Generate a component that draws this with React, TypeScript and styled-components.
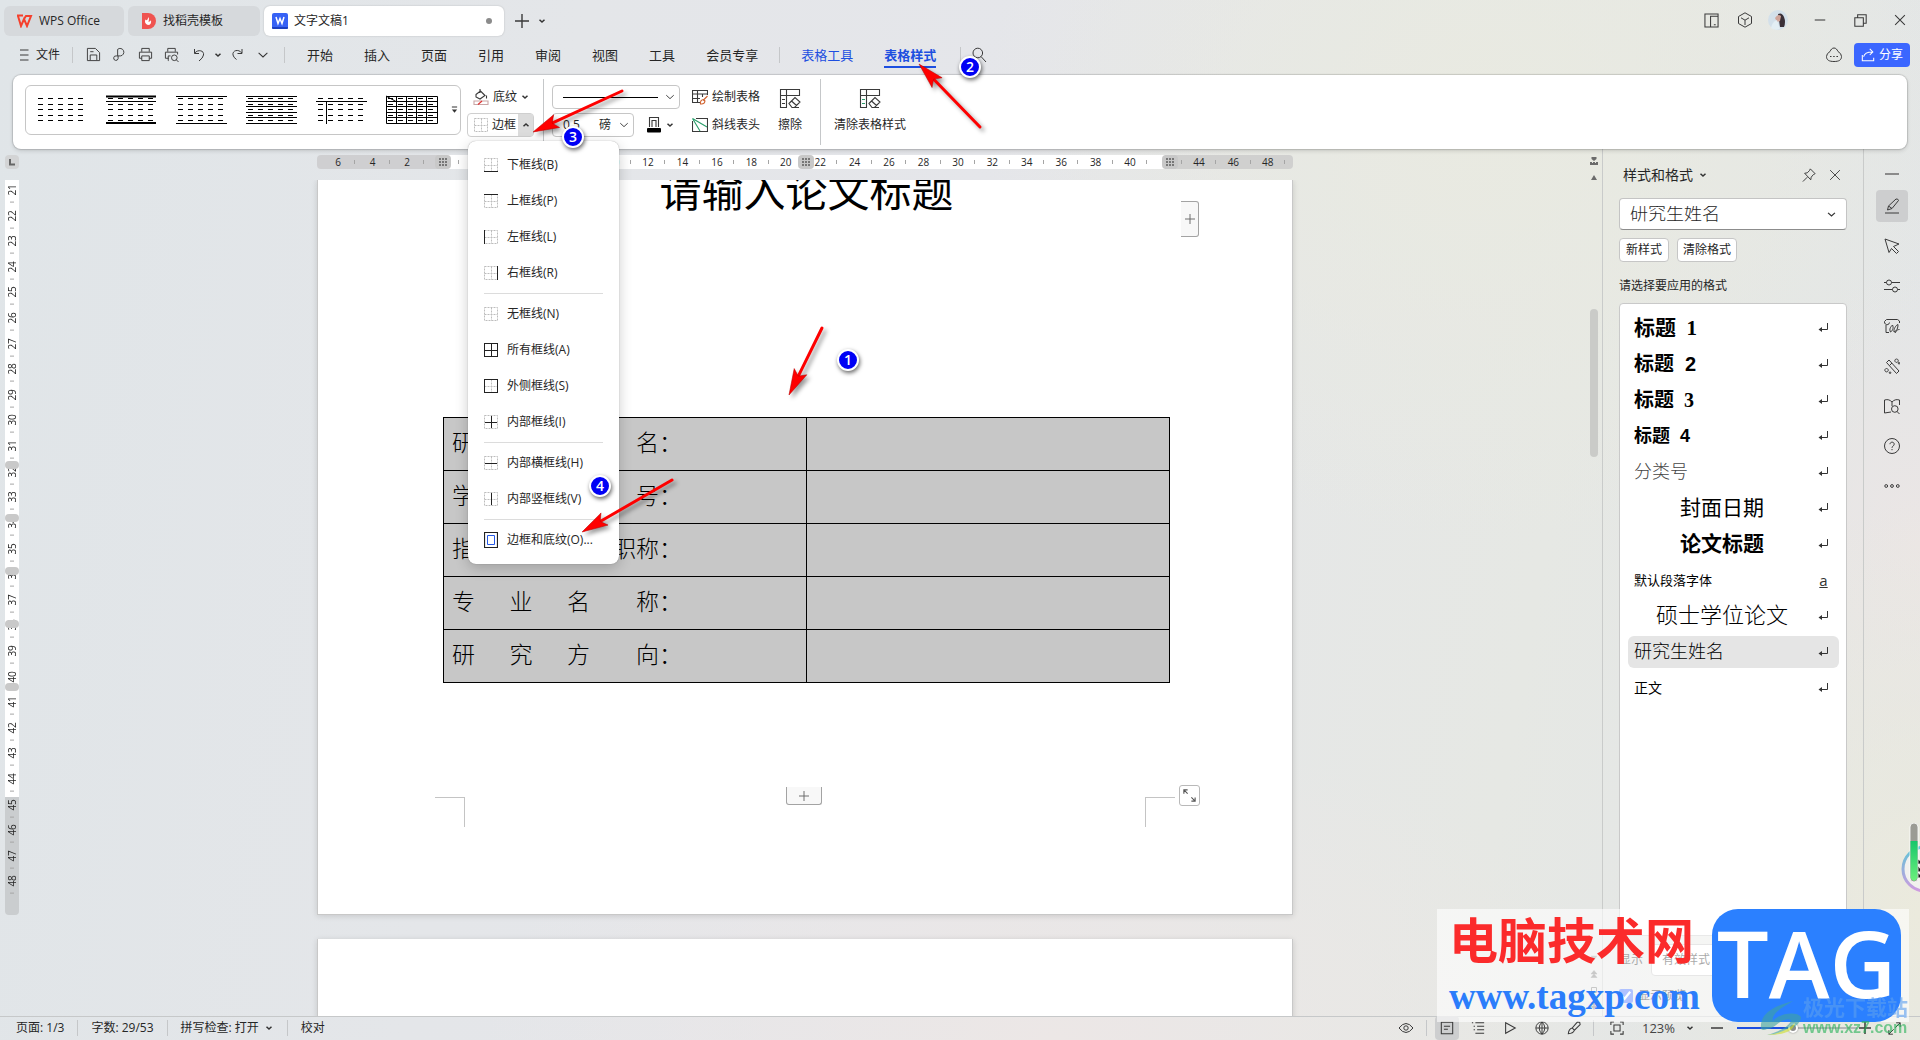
import React from "react";
import styled, { createGlobalStyle, css } from "styled-components";

const UI = `"Open Sans", "Noto Sans CJK SC", sans-serif`;
const SERIF = `"Liberation Serif", "Noto Sans CJK SC", serif`;
const ARIAL = `"Liberation Sans", "Noto Sans CJK SC", sans-serif`;

const Global = createGlobalStyle`
  *, *::before, *::after { box-sizing: border-box; }
  body { margin: 0; font-family: ${UI}; font-size: 12px; line-height: 16px; color: #262626; }
  button, input, select { font: inherit; color: inherit; margin: 0; }
  button { border: 0; padding: 0; background: none; white-space: nowrap; }
  h1, h2, p, ul { margin: 0; padding: 0; font-weight: inherit; font-size: inherit; }
  ul { list-style: none; }
  svg { display: block; flex: none; }
`;

/* ---------- shell ---------- */

const Shell = styled.div`
  position: relative;
  display: flex;
  flex-direction: column;
  height: 100vh;
  overflow: hidden;
  background:
    radial-gradient(ellipse 26% 40% at 77% 12%, #e9eae1 0%, #e9eae100 100%),
    radial-gradient(ellipse 30% 30% at 55% 100%, #ece7e6 0%, #ece7e600 100%),
    radial-gradient(ellipse 16% 40% at 100% 88%, #ebeadd 0%, #ebeadd00 100%),
    radial-gradient(ellipse 10% 26% at 100% 52%, #ebe6e5 0%, #ebe6e500 100%),
    linear-gradient(100deg, #e0e5e8 0%, #e4e6e9 28%, #e5e6ea 50%, #e6e8e4 78%, #e2e5e8 100%);
`;

const Row = styled.div<{ $gap?: number }>`
  display: flex;
  align-items: center;
  gap: ${(p) => p.$gap ?? 0}px;
`;

const Rule = styled.span<{ $l?: number; $r?: number; $h?: number }>`
  flex: none;
  width: 1px;
  height: ${(p) => p.$h ?? 16}px;
  margin: 0 ${(p) => p.$r ?? 0}px 0 ${(p) => p.$l ?? 0}px;
  background: #c5c7c9;
`;

const IconButton = styled.button<{ $w?: number; $h?: number; $on?: boolean }>`
  display: flex;
  flex: none;
  align-items: center;
  justify-content: center;
  width: ${(p) => p.$w ?? 26}px;
  height: ${(p) => p.$h ?? 24}px;
  border-radius: 4px;
  background: ${(p) => (p.$on ? "#cdcecf" : "transparent")};
`;

const Spacer = styled.span`
  flex: 1;
`;

/* ---------- title bar ---------- */

const TitleBar = styled.header`
  display: flex;
  align-items: flex-end;
  height: 36px;
  padding: 0 0 0 4px;
`;

const DocTab = styled.button<{ $w: number; $active?: boolean }>`
  display: flex;
  align-items: center;
  gap: 6px;
  width: ${(p) => p.$w}px;
  height: 30px;
  margin-right: 4px;
  padding: 0 12px 0 8px;
  border-radius: 6px;
  background: ${(p) => (p.$active ? "#fff" : "#d6d9dc")};
  ${(p) => p.$active && css`box-shadow: 0 0 2px #0003;`}
`;

const Dirty = styled.i`
  width: 6px;
  height: 6px;
  margin-left: auto;
  border-radius: 50%;
  background: #8b8b8b;
`;

const WindowTools = styled.div`
  display: flex;
  align-items: center;
  gap: 6px;
  height: 36px;
  padding-top: 4px;
`;

/* ---------- menu row ---------- */

const MenuRow = styled.nav`
  display: flex;
  align-items: center;
  height: 39px;
  padding: 0 10px 2px 16px;
`;

const FileButton = styled.button`
  display: flex;
  align-items: center;
  gap: 4px;
`;

const Tabs = styled.div`
  display: flex;
  gap: 31px;
  height: 100%;
  align-items: center;
`;

const MenuTab = styled.button<{ $blue?: boolean; $active?: boolean }>`
  font-size: 13px;
  line-height: 22px;
  border-bottom: 2px solid ${(p) => (p.$active ? "#1d4fe0" : "transparent")};
  border-top: 2px solid transparent;
  color: ${(p) => (p.$blue ? "#1d4fe0" : "#262626")};
  font-weight: ${(p) => (p.$active ? 700 : 400)};
`;

const ShareButton = styled.button`
  display: flex;
  align-items: center;
  justify-content: center;
  gap: 4px;
  width: 56px;
  height: 24px;
  margin-left: 12px;
  border-radius: 4px;
  background: #3b66ff;
  color: #fff;
`;

/* ---------- ribbon ---------- */

const Ribbon = styled.section`
  position: relative;
  z-index: 2;
  display: flex;
  align-items: flex-start;
  flex: none;
  height: 74px;
  margin: 0 13px;
  padding: 10px 12px;
  border-radius: 8px;
  background: #fff;
  box-shadow: 0 0 1px 1px #0002, 0 2px 4px #0002;
`;

const Gallery = styled.div`
  display: flex;
  align-items: center;
  justify-content: space-between;
  width: 436px;
  height: 50px;
  padding: 0 2px 0 10px;
  border: 1px solid #c6c6c6;
  border-radius: 6px;
`;

const Stack = styled.div<{ $l?: number; $w?: number }>`
  display: flex;
  flex-direction: column;
  gap: 4px;
  margin-left: ${(p) => p.$l ?? 0}px;
  width: ${(p) => (p.$w ? p.$w + "px" : "auto")};
`;

const RibbonButton = styled.button<{ $pad?: number }>`
  display: flex;
  align-items: center;
  gap: 4px;
  height: 24px;
  padding-left: ${(p) => p.$pad ?? 0}px;
`;

const SplitButton = styled.div`
  position: relative;
  display: flex;
  align-items: center;
  height: 24px;
  border: 1px solid #cfcfcf;
  border-radius: 4px;
`;

const SplitArrow = styled.button`
  display: flex;
  align-items: center;
  justify-content: center;
  width: 15px;
  height: 22px;
  margin-left: auto;
  background: #dcdcdc;
`;

const Combo = styled.div<{ $w?: number }>`
  position: relative;
  display: flex;
  align-items: center;
  width: ${(p) => (p.$w ? p.$w + "px" : "100%")};
  height: 24px;
  padding: 0 3px 0 8px;
  border: 1px solid #c6c6c6;
  border-radius: 4px;
  background: #fff;
  select {
    position: absolute;
    inset: 0;
    width: 100%;
    border: 0;
    opacity: 0;
    appearance: none;
  }
`;

const SizeInput = styled.input`
  width: 38px;
  padding: 0 0 0 2px;
  border: 0;
  outline: 0;
  background: none;
`;

const RibbonRule = styled(Rule)`
  height: 66px;
  margin-top: -6px;
`;

const BigButton = styled.button<{ $l: number }>`
  display: flex;
  flex-direction: column;
  align-items: center;
  gap: 8px;
  margin-left: ${(p) => p.$l}px;
  padding-top: 2px;
`;

/* ---------- border menu ---------- */

const Menu = styled.div`
  position: absolute;
  top: 27px;
  left: 0;
  width: 151px;
  padding: 6px 0;
  border-radius: 8px;
  background: #fff;
  box-shadow: 0 0 1px #0006, 0 4px 14px #0003;
  z-index: 5;
  hr {
    height: 1px;
    margin: 2px 16px;
    border: 0;
    background: #dcdcdc;
  }
`;

const MenuItem = styled.button`
  display: flex;
  align-items: center;
  gap: 9px;
  width: 100%;
  height: 36px;
  padding-left: 16px;
`;

/* ---------- workspace ---------- */

const Main = styled.main`
  display: flex;
  flex: 1;
  min-height: 0;
`;

const Editor = styled.section`
  display: grid;
  flex: 1;
  min-width: 0;
  grid-template: 31px minmax(0, 1fr) / 24px minmax(0, 1fr) 16px;
`;

const TabStop = styled.button`
  width: 14px;
  height: 14px;
  margin: 6px 0 0 5px;
  border-radius: 4px;
  background: #d3d4d5;
  display: grid;
  place-items: center;
`;

const Grip = styled.i<{ $x: number }>`
  position: absolute;
  top: 6px;
  left: ${(p) => p.$x}px;
  display: grid;
  place-items: center;
  width: 16px;
  height: 14px;
  border-radius: 4px;
  background: #c8c8c8;
`;

const RulerWrap = styled.div`
  position: relative;
  width: 976px;
  margin: 0 auto;
`;

const HRuler = styled.div`
  display: grid;
  grid-template-columns: repeat(28, minmax(0, 1fr));
  height: 14px;
  margin-top: 6px;
  padding: 0 8px 0 4px;
  border-radius: 4px;
  background: linear-gradient(90deg, #cfcfd1 126px, #fff 126px, #fff 848px, #d0d0cf 848px);
`;

const HCell = styled.span`
  display: grid;
  place-items: center;
  font-size: 10px;
  line-height: 14px;
  background: linear-gradient(#a5a5a5, #a5a5a5) right center / 1px 4px no-repeat;
`;

const VRuler = styled.div`
  position: relative;
  width: 14px;
  height: 735px;
  margin-left: 5px;
  overflow: hidden;
  border-radius: 0 0 4px 4px;
  background: linear-gradient(#fff 617px, #cacdcf 617px);
`;

const VTrack = styled.div`
  display: grid;
  grid-template-rows: repeat(28, minmax(0, 1fr));
  height: 717px;
  margin-top: -3px;
`;

const VCell = styled.span`
  writing-mode: vertical-rl;
  rotate: 180deg;
  display: grid;
  place-items: center;
  font-size: 10px;
  line-height: 14px;
  background: linear-gradient(#a5a5a5, #a5a5a5) center top / 4px 1px no-repeat;
`;

const VGrip = styled.i`
  position: absolute;
  left: 0;
  width: 14px;
  height: 8px;
  border-radius: 4px;
  background: #c9c9c9;
`;

const Viewport = styled.div`
  overflow: hidden;
`;

const Page = styled.article`
  position: relative;
  width: 976px;
  height: 735px;
  margin: 0 auto 24px;
  padding: 0 122px 0 125px;
  background: #fff;
  border: 1px solid #c8c8c8;
  border-top: 0;
  box-shadow: 0 1px 6px #0002;
`;

const PaperTitle = styled.h1`
  padding-bottom: 211px;
  font-family: ${SERIF};
  font-size: 42px;
  line-height: 26px;
  color: #000;
  text-align: center;
`;

const InfoTable = styled.table`
  width: 100%;
  border-collapse: collapse;
  table-layout: fixed;
  background: #c7c7c7;
  font-family: ${SERIF};
  font-weight: 300;
  font-size: 23px;
  line-height: 24px;
  color: #000;
  td, th {
    height: 53px;
    padding: 0 0 0 8px;
    border: 1px solid #000;
    text-align: left;
    font-weight: 300;
    white-space: nowrap;
  }
`;

const CropMark = styled.i<{ $side: "left" | "right" }>`
  position: absolute;
  top: 617px;
  width: 30px;
  height: 30px;
  border-top: 1px solid #c4c4c4;
  ${(p) =>
    p.$side === "left"
      ? css`left: 117px; border-right: 1px solid #c4c4c4;`
      : css`right: 117px; border-left: 1px solid #c4c4c4;`}
`;

const PageButton = styled.button<{ $kind: "row" | "col" | "size" }>`
  position: absolute;
  display: grid;
  place-items: center;
  background: #f8f8f8;
  border: 1px solid #a3a3a3;
  ${(p) =>
    p.$kind === "row" &&
    css`left: 468px; top: 607px; width: 36px; height: 18px; border-top: 0; border-radius: 0 0 3px 3px;`}
  ${(p) =>
    p.$kind === "col" &&
    css`right: 93px; top: 21px; width: 18px; height: 36px; border-left: 0; border-radius: 0 3px 3px 0;`}
  ${(p) =>
    p.$kind === "size" &&
    css`right: 92px; top: 605px; width: 21px; height: 21px; background: #fff; border-color: #b9b9b9; border-radius: 3px;`}
`;

const ScrollHead = styled.div`
  display: flex;
  flex-direction: column;
  align-items: center;
  padding-top: 8px;
`;

const ScrollTrack = styled.div`
  display: flex;
  flex-direction: column;
  align-items: center;
`;

const ScrollThumb = styled.i`
  width: 8px;
  height: 148px;
  margin-top: 129px;
  border-radius: 4px;
  background: #cacbc8;
`;

const PageJump = styled.div`
  display: flex;
  flex-direction: column;
  align-items: center;
  gap: 8px;
  margin: auto 0 6px;
`;

/* ---------- style panel ---------- */

const Panel = styled.aside`
  display: flex;
  flex-direction: column;
  width: 262px;
  padding: 15px 16px 8px 16px;
  border-left: 1px solid #c9cbca;
  border-right: 1px solid #c9cbca;
`;

const PanelHead = styled.div`
  display: flex;
  align-items: center;
  height: 22px;
  padding-left: 4px;
  h2 {
    font-size: 14px;
    line-height: 20px;
  }
`;

const CurrentStyle = styled.div`
  display: flex;
  padding: 12px 0 8px;
`;

const SelectBox = styled.div<{ $large?: boolean }>`
  position: relative;
  flex: 1;
  select {
    display: block;
    width: 100%;
    height: 32px;
    padding: 0 30px 0 10px;
    border: 1px solid #c4c4c4;
    border-radius: 4px;
    background: #fff;
    appearance: none;
    ${(p) =>
      p.$large &&
      css`font-family: ${SERIF}; font-size: 18px; font-weight: 300; border-bottom-color: #8c8c8c;`}
  }
  svg {
    position: absolute;
    right: 10px;
    top: 11px;
    pointer-events: none;
  }
`;

const SmallButton = styled.button<{ $w: number }>`
  display: flex;
  align-items: center;
  justify-content: center;
  gap: 4px;
  width: ${(p) => p.$w}px;
  height: 24px;
  border: 1px solid #c6c6c6;
  border-radius: 4px;
  background: #fff;
`;

const ListLabel = styled.p`
  margin-top: 16px;
`;

const StyleList = styled.ul`
  flex: 1;
  display: flex;
  flex-direction: column;
  gap: 4px;
  margin: 9px 0 8px;
  padding: 8px 7px 8px 8px;
  border: 1px solid #c9c9c9;
  border-radius: 4px;
  background: #fff;
`;

const StyleItem = styled.button<{ $size: number; $font?: string; $weight?: number; $center?: boolean; $on?: boolean; $tone?: string }>`
  display: flex;
  align-items: center;
  width: 100%;
  height: 32px;
  padding: 0 10px 0 6px;
  border-radius: 6px;
  background: ${(p) => (p.$on ? "#e5e5e5" : "transparent")};
  color: ${(p) => p.$tone ?? "#000"};
  font-family: ${(p) => p.$font ?? UI};
  font-size: ${(p) => p.$size}px;
  font-weight: ${(p) => p.$weight ?? 400};
  line-height: 30px;
  > span {
    flex: 1;
    text-align: ${(p) => (p.$center ? "center" : "left")};
    padding-right: 8px;
    white-space: pre;
  }
`;

const CharMark = styled.b`
  width: 11px;
  font: 400 15px/14px ${UI};
  text-decoration: underline;
  color: #333;
  text-align: center;
`;

const PanelFoot = styled.div`
  display: flex;
  align-items: center;
  justify-content: space-between;
  padding-top: 8px;
  label {
    display: flex;
    align-items: center;
    gap: 5px;
  }
  input {
    width: 14px;
    height: 14px;
    accent-color: #3b66ff;
  }
`;

const SideBar = styled.aside`
  display: flex;
  flex-direction: column;
  align-items: center;
  gap: 8px;
  width: 56px;
  padding-top: 17px;
`;

/* ---------- status bar ---------- */

const StatusBar = styled.footer`
  display: flex;
  flex: none;
  align-items: center;
  height: 24px;
  padding: 0 4px 1px 16px;
  border-top: 1px solid #c6c8c9;
  white-space: nowrap;
`;

const StatusIcons = styled.div`
  display: flex;
  gap: 6px;
  padding-left: 6px;
`;

const Zoom = styled.input`
  width: 120px;
  height: 14px;
  margin: 0 1px 0 8px;
  appearance: none;
  background: none;
  &::-webkit-slider-runnable-track {
    height: 2px;
    background: linear-gradient(90deg, #1d4fe0 46%, #b5b7b8 46%);
  }
  &::-webkit-slider-thumb {
    appearance: none;
    width: 10px;
    height: 10px;
    margin-top: -4px;
    border: 2px solid #fff;
    border-radius: 50%;
    background: #8c8c8c;
    box-shadow: 0 0 2px #0006;
  }
`;

const ZoomValue = styled.span`
  margin-left: 12px;
  font-size: 13px;
  color: #444;
`;

/* ---------- overlays ---------- */

const Arrows = styled.svg`
  position: absolute;
  top: 0;
  left: 0;
  z-index: 8;
  pointer-events: none;
  filter: drop-shadow(3px 3px 2px #0006);
`;

const Step = styled.span<{ $x: number; $y: number }>`
  position: absolute;
  left: ${(p) => p.$x - 11}px;
  top: ${(p) => p.$y - 11}px;
  z-index: 9;
  width: 22px;
  height: 22px;
  border: 2px solid #fff;
  border-radius: 50%;
  background: #0000f5;
  color: #fff;
  font-size: 14px;
  font-weight: 600;
  line-height: 18px;
  text-align: center;
  box-shadow: 1px 2px 4px #0009;
`;

const Watermark = styled.div`
  position: absolute;
  right: 11px;
  bottom: 18px;
  z-index: 6;
  display: flex;
  justify-content: space-between;
  width: 472px;
  height: 113px;
  padding: 0 8px 0 12px;
  background: #ffffff99;
`;

const SiteName = styled.div`
  font: 700 49px/58px "Noto Sans CJK SC", sans-serif;
  color: #fb2b2b;
  white-space: nowrap;
`;

const SiteUrl = styled.div`
  margin-top: 10px;
  font: 700 37px/40px "Liberation Serif", serif;
  color: #2b7dfb;
`;

const TagBadge = styled.div`
  width: 189px;
  height: 113px;
  border-radius: 26px;
  background: #2b80ff;
  color: #fff;
  font: 600 92px/108px "Open Sans", sans-serif;
  text-align: center;
`;

const Aurora = styled.div`
  position: absolute;
  right: 12px;
  bottom: 3px;
  z-index: 7;
  display: flex;
  align-items: flex-end;
  opacity: 0.6;
  white-space: nowrap;
`;

const AuroraName = styled.div`
  font: 700 21px/26px "Noto Sans CJK SC", sans-serif;
  color: #5b9ef0;
`;

const AuroraUrl = styled.div`
  font: 700 16px/18px "Liberation Sans", sans-serif;
  color: #25b257;
`;

const Meter = styled.div`
  position: absolute;
  right: 0;
  top: 823px;
  z-index: 6;
`;

/* ---------- icons ---------- */

type IcoProps = { d: string; s?: number; c?: string; w?: number; fill?: string; children?: React.ReactNode };
const Ico = ({ d, s = 16, c = "#3a3a3a", w = 1, fill = "none", children }: IcoProps) => (
  <svg width={s} height={s} viewBox="0 0 16 16" fill={fill} stroke={c} strokeWidth={w} aria-hidden="true">
    <path d={d} />
    {children}
  </svg>
);

const Caret = ({ up, s = 8, w = 1.5, c = "#333" }: { up?: boolean; s?: number; w?: number; c?: string }) => (
  <svg width={s} height={s} viewBox="0 0 8 8" fill="none" stroke={c} strokeWidth={w} aria-hidden="true">
    <path d={up ? "M1.500 5.200 4 2.900 6.500 5.200" : "M1.500 2.800 4 5.100 6.500 2.800"} />
  </svg>
);

const Dots = () => (
  <svg width="10" height="10" viewBox="0 0 10 10" fill="#777" aria-hidden="true">
    {[1, 4, 7].map((y) => [1, 4, 7].map((x) => <rect key={`${x}${y}`} x={x} y={y} width="2" height="2" />))}
  </svg>
);

const EDGES: Record<string, string> = {
  b: "M0 13.5H14",
  t: "M0 .5H14",
  l: "M.5 0V14",
  r: "M13.5 0V14",
  h: "M1 7.5H13",
  v: "M7.5 1V13",
};

const BorderIcon = ({ edges }: { edges: string }) => (
  <svg width="14" height="14" viewBox="0 0 14 14" fill="none" aria-hidden="true">
    <path d="M.5.5H13.5V13.5H.5ZM.5 7.5H13.5M7.5 .5V13.5" stroke="#bdbdbd" strokeDasharray="2 1" />
    <path d={edges.split("").map((e) => EDGES[e]).join("")} stroke="#222" />
  </svg>
);

const FrameIcon = () => (
  <svg width="14" height="16" viewBox="0 0 14 16" fill="none" aria-hidden="true">
    <path d="M.5.5H13.5V15.5H.5Z" stroke="#222" strokeWidth="1.2" />
    <path d="M3.5 3.5H10.5V12.5H3.5Z" stroke="#2458e6" />
  </svg>
);

const dashes = [3, 9, 14, 20, 25].map((y) => [2, 12, 22, 32, 42].map((x) => `M${x} ${y + 0.5}h5`).join("")).join("");
const PREVIEWS: { extra: string; bold?: string }[] = [
  { extra: "" },
  { extra: "M0 6.5H50", bold: "M0 1.5H50M0 28H50" },
  { extra: "M0 1.5H51M0 28.5H51" },
  { extra: "M0 1.5H51M0 6.5H51M0 11.5H51M0 17.5H51M0 22.5H51M0 28.5H51" },
  { extra: "M0 6.5H51M10.5 6V29" },
  { extra: "M.5 1.5H51.5V28.5H.5ZM.5 6.5H51M.5 11.5H51M.5 17.5H51M.5 22.5H51M10.5 1V28M20.5 1V28M30.5 1V28M40.5 1V28M0 1 10 6.5" },
];
const Preview = ({ extra, bold }: { extra: string; bold?: string }) => (
  <svg width="52" height="30" viewBox="0 0 52 30" fill="none" stroke="#000" aria-hidden="true">
    <path d={dashes} />
    <path d={extra} />
    {bold && <path d={bold} strokeWidth="2" />}
  </svg>
);

const GridEraser = ({ tint = "#3a3a3a" }: { tint?: string }) => (
  <svg width="22" height="22" viewBox="0 0 22 22" fill="none" stroke="#3a3a3a" strokeWidth="1.1" aria-hidden="true">
    <path d="M8 20.500H1.500V2.500H20.500V9M1.500 8.500H20.500M7.500 2.500V20.500" />
    <path d="M3 12.500H6M3 16.500H6" stroke={tint} />
    <path d="m10 16.500 6-6 5 4.500-5.500 5.500h-2.500zM12.500 14l5 4.500M15 20.500h5" />
  </svg>
);

const ReturnMark = () => (
  <svg width="11" height="11" viewBox="0 0 11 11" fill="none" stroke="#333" aria-hidden="true">
    <path d="M9.500 0V6.500H2" />
    <path d="M4 4V9L.5 6.500Z" fill="#333" stroke="none" />
  </svg>
);

/* ---------- data ---------- */

const MENU: ([string, string] | null)[] = [
  ["b", "下框线(B)"],
  ["t", "上框线(P)"],
  ["l", "左框线(L)"],
  ["r", "右框线(R)"],
  null,
  ["", "无框线(N)"],
  ["btlrhv", "所有框线(A)"],
  ["btlr", "外侧框线(S)"],
  ["hv", "内部框线(I)"],
  null,
  ["h", "内部横框线(H)"],
  ["v", "内部竖框线(V)"],
  null,
  ["frame", "边框和底纹(O)..."],
];

const STYLES = [
  { t: "标题  1", size: 21, font: SERIF, weight: 700 },
  { t: "标题  2", size: 20, font: ARIAL, weight: 700 },
  { t: "标题  3", size: 20, font: SERIF, weight: 700 },
  { t: "标题  4", size: 18, font: ARIAL, weight: 700 },
  { t: "分类号", size: 18, font: SERIF, weight: 300, tone: "#444" },
  { t: "封面日期", size: 21, font: ARIAL, weight: 400, center: true },
  { t: "论文标题", size: 21, font: SERIF, weight: 700, center: true },
  { t: "默认段落字体", size: 13, mark: "a" },
  { t: "硕士学位论文", size: 22, font: SERIF, weight: 300, center: true },
  { t: "研究生姓名", size: 18, font: SERIF, weight: 300, on: true },
  { t: "正文", size: 14 },
];

const ROWS = [
  "研\u3000究\u3000生\u3000姓\u3000名：",
  "学\u3000\u3000\u3000\u3000\u3000\u3000\u3000号：",
  "指导教师姓名、职称：",
  "专\u3000\u2002业\u3000\u2002名\u3000\u3000称：",
  "研\u3000\u2002究\u3000\u2002方\u3000\u3000向：",
];

const H_MARKS = Array.from({ length: 28 }, (_, i) => Math.abs(i - 3) * 2);
const COLUMN_GRIPS = [118, 481, 845];
const V_MARKS = Array.from({ length: 28 }, (_, i) => 21 + i);
const ROW_GRIPS = [281, 334, 387, 440, 503];

const SIDE: [string, string][] = [
  ["属性", "M1 15H15M3.500 12l1-4 7.500-7q2-.5 2.500 1.500L8 10.500ZM4.500 8l3.500 2.500"],
  ["选择", "M1 1 15 6 9.500 8.500 14.500 13.500 12.500 15.500 7.500 10.500 5 14.500Z"],
  ["设置", "M0 4.500H2.500M7.500 4.500H16M0 11.500H8.500M13.500 11.500H16M2.500 4.500a2.500 2.500 0 1 0 5 0a2.500 2.500 0 1 0-5 0M8.500 11.500a2.500 2.500 0 1 0 5 0a2.500 2.500 0 1 0-5 0"],
  ["素材", "M5 14.500H2V7M15.500 5V3L13.500 1.500H2.500L.5 3.500C0 7 5 8 5.500 4.500M6.500 14C5 11 6.500 9 8.500 7C10 10 8.500 13 6.500 14ZM10 14C9.500 11 12 7 14 6.500C14 10 13 13 10 14ZM11 15C12.500 12 14 11.500 15.500 11.500"],
  ["工具", "M2.500 4.500 5 2 15 13 12.500 15.500ZM5.500 7.500 8 5M12.500 1a1.700 1.700 0 1 0 .1 0M2.500 10.500a1.700 1.700 0 1 0 .1 0M15 4.500a.8.800 0 1 0 .1 0M6 14a.8.800 0 1 0 .1 0"],
  ["查找", "M7 14 .5 15V2C4 1 6 2 8 4C10 2 12 1 15.500 2V7M8 4V8M7.500 11a3.300 3.300 0 1 0 6.600 0a3.300 3.300 0 1 0-6.600 0M13 13.500 15.500 16"],
  ["帮助", "M.5 8a7.500 7.500 0 1 0 15 0a7.500 7.500 0 1 0-15 0M6 6.200C6 3.500 10.200 3.500 10.200 6.200C10.200 8 8 8 8 9.800M8 11V12.200"],
  ["更多", "M.8 8a1.400 1.400 0 1 0 2.800 0a1.400 1.400 0 1 0-2.800 0M6.600 8a1.400 1.400 0 1 0 2.800 0a1.400 1.400 0 1 0-2.800 0M12.400 8a1.400 1.400 0 1 0 2.800 0a1.400 1.400 0 1 0-2.800 0"],
];

const ARROWS = [
  [822, 328, 789, 395],
  [980, 127, 919, 64],
  [622, 91, 533, 132],
  [672, 480, 582, 532],
];

const STEPS: [number, number, number][] = [
  [1, 848, 360],
  [2, 970, 67],
  [3, 573, 137],
  [4, 600, 486],
];

/* ---------- component ---------- */

export default function App() {
  return (
    <Shell>
      <Global />
      <TitleBar>
        <DocTab $w={120}>
          <svg width="21" height="14" viewBox="0 0 21 14" fill="none" stroke="#f5402c" strokeWidth="2" aria-hidden="true">
            <path d="M5 1.500H11M6 2 9 12 12 5 15 12 19 2H14L12 5" />
          </svg>
          WPS Office
        </DocTab>
        <DocTab $w={132}>
          <svg width="21" height="16" viewBox="0 0 21 16" aria-hidden="true">
            <path d="M6 0H12a8 8 0 0 1 0 16H6Z" fill="#ef5350" />
            <path d="M12 12C9 11 8.500 8.500 9.500 6.500C11 8 11.500 7 12.500 4C13.500 6 12.500 8 12.500 9C14 8.500 14.500 8 15 7C15.500 10 14.500 12 12 12Z" fill="#fff" />
          </svg>
          找稻壳模板
        </DocTab>
        <DocTab $w={240} $active>
          <svg width="16" height="16" viewBox="0 0 16 16" aria-hidden="true">
            <rect width="16" height="16" rx="2" fill="#3762f5" />
            <path d="M0 14H16V15Q16 16 15 16H1Q0 16 0 15Z" fill="#1c3fc0" />
            <path d="M4 4 6 10.500 8 5.500 10 10.500 12 4" fill="none" stroke="#fff" strokeWidth="1.500" />
          </svg>
          文字文稿1
          <Dirty />
        </DocTab>
        <IconButton aria-label="新建标签" $w={28} $h={30}><Ico d="M8 1V15M1 8H15" w={1.4} /></IconButton>
        <IconButton aria-label="标签列表" $w={12} $h={30}><Caret /></IconButton>
        <Spacer />
        <WindowTools>
          <Row>
            <IconButton aria-label="侧栏" $w={33}><Ico s={15} d="M1 1H15V15H1ZM7 15V3.500H15M10.500 12.500H12.500" w={1.1} /></IconButton>
            <IconButton aria-label="应用" $w={33}><Ico d="M8 .8 14.500 4.500V11.500L8 15.200 1.500 11.500V4.500ZM4 5.800 8 8.200 12 5.800M8 8.200V13" /></IconButton>
            <IconButton aria-label="账户" $w={33}>
              <svg width="20" height="20" viewBox="0 0 20 20" aria-hidden="true">
                <circle cx="10" cy="10" r="10" fill="#d3e0ea" />
                <path d="M10 4Q14 2 16 7Q18 12 16 17H12L11 10Z" fill="#3a3038" />
                <path d="M7 8Q10 3 13 6L12 11 9 12Z" fill="#cfa49a" />
                <path d="M3 18Q4 12 9 10L12 19Q7 21 3 18Z" fill="#e3eef4" />
              </svg>
            </IconButton>
          </Row>
          <Row>
            <IconButton aria-label="最小化" $w={40}><Ico s={12} d="M1 8H15" w={1.4} /></IconButton>
            <IconButton aria-label="还原" $w={40}><Ico s={13} d="M1 4.500H11.500V15H1ZM4.500 4V1H15V11.500H12" w={1.3} /></IconButton>
            <IconButton aria-label="关闭" $w={40}><Ico s={12} d="M1.500 1.500 14.500 14.500M14.500 1.500 1.500 14.500" w={1.4} /></IconButton>
          </Row>
        </WindowTools>
      </TitleBar>

      <MenuRow>
        <FileButton><Ico d="M4 3H12.500M4 8H12.500M4 13H12.500" />文件</FileButton>
        <Rule $l={12} $r={7} />
        <IconButton aria-label="保存"><Ico s={15} d="M1.500 1.500H10L14.500 6V14.500H1.500ZM4.500 14V8.500H11.500V14M4.500 5H8" /></IconButton>
        <IconButton aria-label="输出"><Ico s={15} d="M6 9.500V2.500A4 4 0 1 1 9 9.500H4.500A2.400 2.400 0 1 0 6.500 12.500V9.500" /></IconButton>
        <IconButton aria-label="打印"><Ico s={15} d="M4 5V1.500H12V5M4 12H1.500V5.500H14.500V12H12M4 9.500H12V14.500H4Z" /></IconButton>
        <IconButton aria-label="打印预览"><Ico s={15} d="M4 5V1.500H12V5M5 12H1.500V5.500H14.500V8M5 14.500H4.500V9.500H7M8 11.500a3 3 0 1 0 6 0a3 3 0 1 0-6 0M13 13.500 15.500 16" /></IconButton>
        <Rule $l={1} $r={0} $h={0} />
        <IconButton aria-label="撤销"><Ico d="M3.500 2V6.500H8M3.800 6C7 2 13.500 3.500 12.500 8Q12 11 8 14" /></IconButton>
        <IconButton aria-label="撤销列表" $w={12}><Caret /></IconButton>
        <IconButton aria-label="恢复"><Ico d="M13 2V6.500H8.500M12.800 6C9.500 1.500 3 3.500 4 8Q4.500 10.500 7.500 12.500" /></IconButton>
        <IconButton aria-label="更多命令"><Caret s={14} w={0.6} /></IconButton>
        <Rule $l={8} $r={22} />
        <Tabs>
          {["开始", "插入", "页面", "引用", "审阅", "视图", "工具", "会员专享"].map((t) => (
            <MenuTab key={t}>{t}</MenuTab>
          ))}
        </Tabs>
        <Rule $l={21} $r={21} />
        <Tabs>
          <MenuTab $blue>表格工具</MenuTab>
          <MenuTab $blue $active>表格样式</MenuTab>
        </Tabs>
        <Rule $l={24} $r={6} />
        <IconButton aria-label="搜索" $w={24}><Ico d="M2 6a4.800 4.800 0 1 0 9.600 0a4.800 4.800 0 1 0-9.600 0M10 9.500 15 15" /></IconButton>
        <Spacer />
        <IconButton aria-label="云状态" $w={16}><Ico d="M8 1C10 1 11 2.500 12 4.500Q15.500 6.500 15.500 9.500C15.500 13 13 14.500 8 14.500S.5 13 .5 9.500Q.5 6.500 4 4.500C5 2.500 6 1 8 1ZM4 9.500H5.500M7.200 9.500H8.700M10.400 9.500H12" /></IconButton>
        <ShareButton><Ico d="M1.500 8V14.500H14.500V11M3 10Q4 4.500 13 4.500M10 1 13.500 4.500 10 8" c="#fff" w={1.2} s={14} />分享</ShareButton>
      </MenuRow>

      <Ribbon>
        <Gallery>
          <Row $gap={18}>
            {PREVIEWS.map((p, i) => (
              <button key={i} aria-label={`表格样式 ${i + 1}`}><Preview {...p} /></button>
            ))}
          </Row>
          <button aria-label="更多样式">
            <svg width="7" height="8" viewBox="0 0 8 8" aria-hidden="true"><path d="M1 0H7V1.200H1ZM1 3.500H7L4 7Z" fill="#333" /></svg>
          </button>
        </Gallery>
        <Stack $l={6} $w={67}>
          <RibbonButton $pad={6}>
            <Ico d="M7 0V4M3 5.500 7.500 2 12 6.500 7 10 3 8ZM13.500 6.500V9.500" w={1.1}>
              <path d="M1 12H15V15.500H1Z" stroke="#c9a5a5" />
              <path d="M5 15.500 9 12" stroke="#e03030" />
            </Ico>
            底纹
            <Caret />
          </RibbonButton>
          <SplitButton>
            <RibbonButton $pad={6}><BorderIcon edges="" />边框</RibbonButton>
            <SplitArrow aria-label="边框选项" aria-expanded="true"><Caret up /></SplitArrow>
            <Menu role="menu">
              {MENU.map((m, i) =>
                m ? (
                  <MenuItem key={i} role="menuitem">
                    {m[0] === "frame" ? <FrameIcon /> : <BorderIcon edges={m[0]} />}
                    {m[1]}
                  </MenuItem>
                ) : (
                  <hr key={i} />
                )
              )}
            </Menu>
          </SplitButton>
        </Stack>
        <RibbonRule $l={9} $r={8} />
        <Stack $w={128}>
          <Combo>
            <svg width="97" height="1" viewBox="0 0 97 1" aria-hidden="true"><path d="M2 .5H97" stroke="#000" /></svg>
            <Spacer />
            <Caret s={12} w={0.6} />
            <select aria-label="线型"><option>实线</option></select>
          </Combo>
          <Row $gap={10}>
            <Combo $w={82}>
              <SizeInput aria-label="线条粗细" defaultValue="0.5" />
              磅
              <Spacer />
              <Caret s={12} w={0.6} />
            </Combo>
            <Row>
              <IconButton aria-label="边框颜色" $w={20}>
                <Ico d="M3.500 10V.5H12.500V10M6 10V3.500H10V10" w={1.1}>
                  <rect x="1" y="11" width="14" height="4.500" rx="1" fill="#000" stroke="none" />
                </Ico>
              </IconButton>
              <IconButton aria-label="颜色列表" $w={12}><Caret /></IconButton>
            </Row>
          </Row>
        </Stack>
        <Stack $l={12}>
          <RibbonButton>
            <Ico d="M8 13.500H.5V1.500H15.500V6M.5 5H15.500M.5 9.500H8M5.500 1.500V13.500M10.500 5V8" w={1.1}>
              <path d="M15.500 7 11 11.500M11.500 10.500Q8 11 8.500 15Q12.500 15.500 13 12Z" stroke="#d0622e" />
            </Ico>
            绘制表格
          </RibbonButton>
          <RibbonButton>
            <Ico d="M4 1.500H15.500V14.500H.5V4" w={1.1}>
              <path d="M.5 1.500 15 10M.5 1.500 8 14" stroke="#2a9d6a" />
            </Ico>
            斜线表头
          </RibbonButton>
        </Stack>
        <BigButton $l={18}><GridEraser />擦除</BigButton>
        <RibbonRule $l={18} $r={0} />
        <BigButton $l={13}><GridEraser tint="#2a9d6a" />清除表格样式</BigButton>
      </Ribbon>

      <Main>
        <Editor>
          <TabStop aria-label="制表符"><Ico s={8} d="M4 2V13H14" w={4} c="#666" /></TabStop>
          <RulerWrap>
            <HRuler>
              {H_MARKS.map((n, i) => (
                <HCell key={i}>{n === 0 || i === 24 ? null : n}</HCell>
              ))}
            </HRuler>
            {COLUMN_GRIPS.map((x) => <Grip key={x} $x={x}><Dots /></Grip>)}
          </RulerWrap>
          <ScrollHead>
            <svg width="8" height="24" viewBox="0 0 8 24" fill="#6b6b6b" aria-hidden="true">
              <path d="M1.500 0H6.500V2L4 4 1.500 2ZM0 5H2V6H3V5H5V6H6V5H8V8H0ZM4 18 7 23H1Z" />
            </svg>
          </ScrollHead>
          <VRuler>
            <VTrack>{V_MARKS.map((n) => <VCell key={n}>{n}</VCell>)}</VTrack>
            {ROW_GRIPS.map((y) => <VGrip key={y} style={{ top: y }} />)}
          </VRuler>
          <Viewport>
            <Page>
              <PaperTitle>请输入论文标题</PaperTitle>
              <InfoTable>
                <tbody>
                  {ROWS.map((r) => (
                    <tr key={r}><th scope="row">{r}</th><td /></tr>
                  ))}
                </tbody>
              </InfoTable>
              <CropMark $side="left" />
              <CropMark $side="right" />
              <PageButton $kind="col" aria-label="添加列"><Ico s={10} d="M8 0V16M0 8H16" w={1.5} c="#666" /></PageButton>
              <PageButton $kind="row" aria-label="添加行"><Ico s={10} d="M8 0V16M0 8H16" w={1.5} c="#666" /></PageButton>
              <PageButton $kind="size" aria-label="调整大小"><Ico s={15} d="M2 6V2H6M2 2 6 6M14 10V14H10M14 14 10 10" c="#555" w={1.2} /></PageButton>
            </Page>
            <Page />
          </Viewport>
          <ScrollTrack>
            <ScrollThumb />
            <PageJump>
              <Ico s={8} d="M2 4H14L8 12Z" fill="#999" c="#999" />
              <Ico s={8} d="M2 8H14L8 1ZM2 15H14L8 8Z" fill="#777" c="#777" />
              <Ico s={8} d="M3 3H13V13H3Z" w={2} c="#777" />
              <Ico s={8} d="M2 1H14L8 8ZM2 8H14L8 15Z" fill="#777" c="#777" />
            </PageJump>
          </ScrollTrack>
        </Editor>

        <Panel>
          <PanelHead>
            <h2>样式和格式</h2>
            <IconButton aria-label="面板列表" $w={20}><Caret /></IconButton>
            <Spacer />
            <IconButton aria-label="固定" $w={28}><Ico s={14} d="M9.500 1 15 6.500 13 7.500 10.500 10.500 10 13.500 3 6 6 5.500 8.500 3ZM6 10.500 1 15.500" w={1.1} /></IconButton>
            <IconButton aria-label="关闭面板" $w={24}><Ico s={12} d="M1.500 1.500 14.500 14.500M14.500 1.500 1.500 14.500" w={1.2} /></IconButton>
          </PanelHead>
          <CurrentStyle>
            <SelectBox $large>
              <select aria-label="当前样式"><option>研究生姓名</option></select>
              <Caret s={11} w={0.9} />
            </SelectBox>
          </CurrentStyle>
          <Row $gap={8}>
            <SmallButton $w={50}>新样式</SmallButton>
            <SmallButton $w={60}>清除格式</SmallButton>
          </Row>
          <ListLabel>请选择要应用的格式</ListLabel>
          <StyleList>
            {STYLES.map((s) => (
              <li key={s.t}>
                <StyleItem $size={s.size} $font={s.font} $weight={s.weight} $center={s.center} $on={s.on} $tone={s.tone}>
                  <span>{s.t}</span>
                  {s.mark ? <CharMark>{s.mark}</CharMark> : <ReturnMark />}
                </StyleItem>
              </li>
            ))}
          </StyleList>
          <Row $gap={8}>
            <label htmlFor="show">显示</label>
            <SelectBox>
              <select id="show"><option>有效样式</option></select>
              <Caret s={11} w={0.9} />
            </SelectBox>
          </Row>
          <PanelFoot>
            <label><input type="checkbox" defaultChecked />显示预览</label>
            <SmallButton $w={80}><Ico s={12} d="M2 2H14V14H2ZM5 6H11M5 10H9" c="#d59a2e" />智能排版</SmallButton>
          </PanelFoot>
        </Panel>

        <SideBar>
          <IconButton aria-label="收起" $w={32} $h={16}><Ico d="M1 8H15" w={2} c="#8b8b8b" /></IconButton>
          {SIDE.map(([name, d], i) => (
            <IconButton key={name} aria-label={name} $w={32} $h={32} $on={i === 0}><Ico d={d} /></IconButton>
          ))}
        </SideBar>
      </Main>

      <StatusBar>
        <span>页面: 1/3</span>
        <Rule $l={13} $r={13} />
        <span>字数: 29/53</span>
        <Rule $l={13} $r={13} />
        <span>拼写检查: 打开</span>
        <IconButton aria-label="拼写选项" $w={20} $h={20}><Caret /></IconButton>
        <Rule $l={8} $r={13} />
        <span>校对</span>
        <Spacer />
        <IconButton aria-label="护眼" $w={28}><Ico d="M1 8Q8-1 15 8Q8 17 1 8ZM5.800 8a2.200 2.200 0 1 0 4.400 0a2.200 2.200 0 1 0-4.400 0" /></IconButton>
        <Rule $l={6} $r={8} />
        <IconButton aria-label="页面视图" $w={24} $on><Ico s={14} d="M1.500 1.500H14.500V14.500H1.500ZM4.500 6H11.500M4.500 9.500H9" w={1.2} /></IconButton>
        <StatusIcons>
          <IconButton aria-label="大纲"><Ico s={14} d="M1 2H2.500M5 2H15M3 6H4.500M7 6H15M3 10H4.500M7 10H15M5 14H15" w={1.2} /></IconButton>
          <IconButton aria-label="阅读"><Ico s={14} d="M3 2 14 8 3 14Z" w={1.2} /></IconButton>
          <IconButton aria-label="网页"><Ico s={14} d="M1 8a7 7 0 1 0 14 0a7 7 0 1 0-14 0M1 8H15M8 1V15M8 1Q1.500 8 8 15Q14.500 8 8 1" w={1.1} /></IconButton>
          <IconButton aria-label="写作"><Ico s={14} d="M14.500 1.500 12 1 6 8 8.500 10.500 15 4ZM6 8Q2 9 1.500 14.500Q7 14.500 8.500 10.500" w={1.2} /></IconButton>
        </StatusIcons>
        <Rule $l={6} $r={10} />
        <IconButton aria-label="适合页面"><Ico s={14} d="M1 4.500V1H4.500M11.500 1H15V4.500M15 11.500V15H11.500M4.500 15H1V11.500M4.500 4.500H11.500V11.500H4.500Z" w={1.2} /></IconButton>
        <ZoomValue>123%</ZoomValue>
        <IconButton aria-label="缩放列表" $w={30} $h={20}><Caret /></IconButton>
        <IconButton aria-label="缩小" $w={24} $h={20}><Ico s={12} d="M0 8H16" w={2} /></IconButton>
        <Zoom type="range" aria-label="缩放比例" defaultValue={46} />
        <IconButton aria-label="放大" $w={14} $h={20}><Ico s={12} d="M0 8H16M8 0V16" w={2} /></IconButton>
        <IconButton aria-label="全屏" $w={44} $h={20}><Ico s={13} d="M9 7 15 1M10 1H15V6M7 9 1 15M1 10V15H6" w={1.2} /></IconButton>
      </StatusBar>

      <Watermark>
        <div>
          <SiteName>电脑技术网</SiteName>
          <SiteUrl>www.tagxp.com</SiteUrl>
        </div>
        <TagBadge>TAG</TagBadge>
      </Watermark>
      <Aurora>
        <svg width="44" height="38" viewBox="0 0 44 38" aria-hidden="true">
          <path d="M2 30C0 12 20 6 34 2C20 10 12 16 14 22C20 14 38 12 42 18C42 28 24 36 8 36C22 32 32 26 32 21C22 18 16 30 8 30Q4 32 2 30Z" fill="#3fa4a0" />
          <path d="M8 36Q26 34 36 24Q34 36 8 36Z" fill="#cde02a" />
        </svg>
        <div>
          <AuroraName>极光下载站</AuroraName>
          <AuroraUrl>www.xz7.com</AuroraUrl>
        </div>
      </Aurora>
      <Meter>
        <svg width="20" height="72" viewBox="0 0 20 72" aria-hidden="true">
          <defs>
            <linearGradient id="ring" x1="0" y1="0" x2="0" y2="1">
              <stop offset="0" stopColor="#5cc6d6" />
              <stop offset="1" stopColor="#cf9be0" />
            </linearGradient>
            <linearGradient id="level" x1="0" y1="0" x2="0" y2="1">
              <stop offset="0" stopColor="#16c66b" />
              <stop offset="1" stopColor="#6cf07c" />
            </linearGradient>
          </defs>
          <circle cx="25" cy="46" r="22" fill="#f1f1ee" stroke="url(#ring)" strokeWidth="3" />
          <path d="M15 36 20 40M15 42 20 48M17 51 20 54" stroke="#111" strokeWidth="3" />
          <rect x="10" y="0" width="8" height="59" rx="4" fill="#9b9b94" stroke="#fff" strokeWidth=".8" />
          <path d="M10.500 18H17.500V55Q14 61 10.500 55Z" fill="url(#level)" />
        </svg>
      </Meter>

      <Arrows width="1920" height="1040" viewBox="0 0 1920 1040" aria-hidden="true">
        {ARROWS.map(([x1, y1, x2, y2]) => {
          const len = Math.hypot(x2 - x1, y2 - y1);
          const a = (Math.atan2(y2 - y1, x2 - x1) * 180) / Math.PI;
          return (
            <g key={x1} transform={`translate(${x2} ${y2}) rotate(${a})`}>
              <path d={`M${-len} 0H-18`} stroke="#fe0000" strokeWidth="3" strokeLinecap="round" />
              <path d="M0 0-26-7-21 0-26 7Z" fill="#fe0000" stroke="#b00" strokeWidth=".5" />
            </g>
          );
        })}
      </Arrows>
      {STEPS.map(([n, x, y]) => (
        <Step key={n} $x={x} $y={y}>{n}</Step>
      ))}
    </Shell>
  );
}
